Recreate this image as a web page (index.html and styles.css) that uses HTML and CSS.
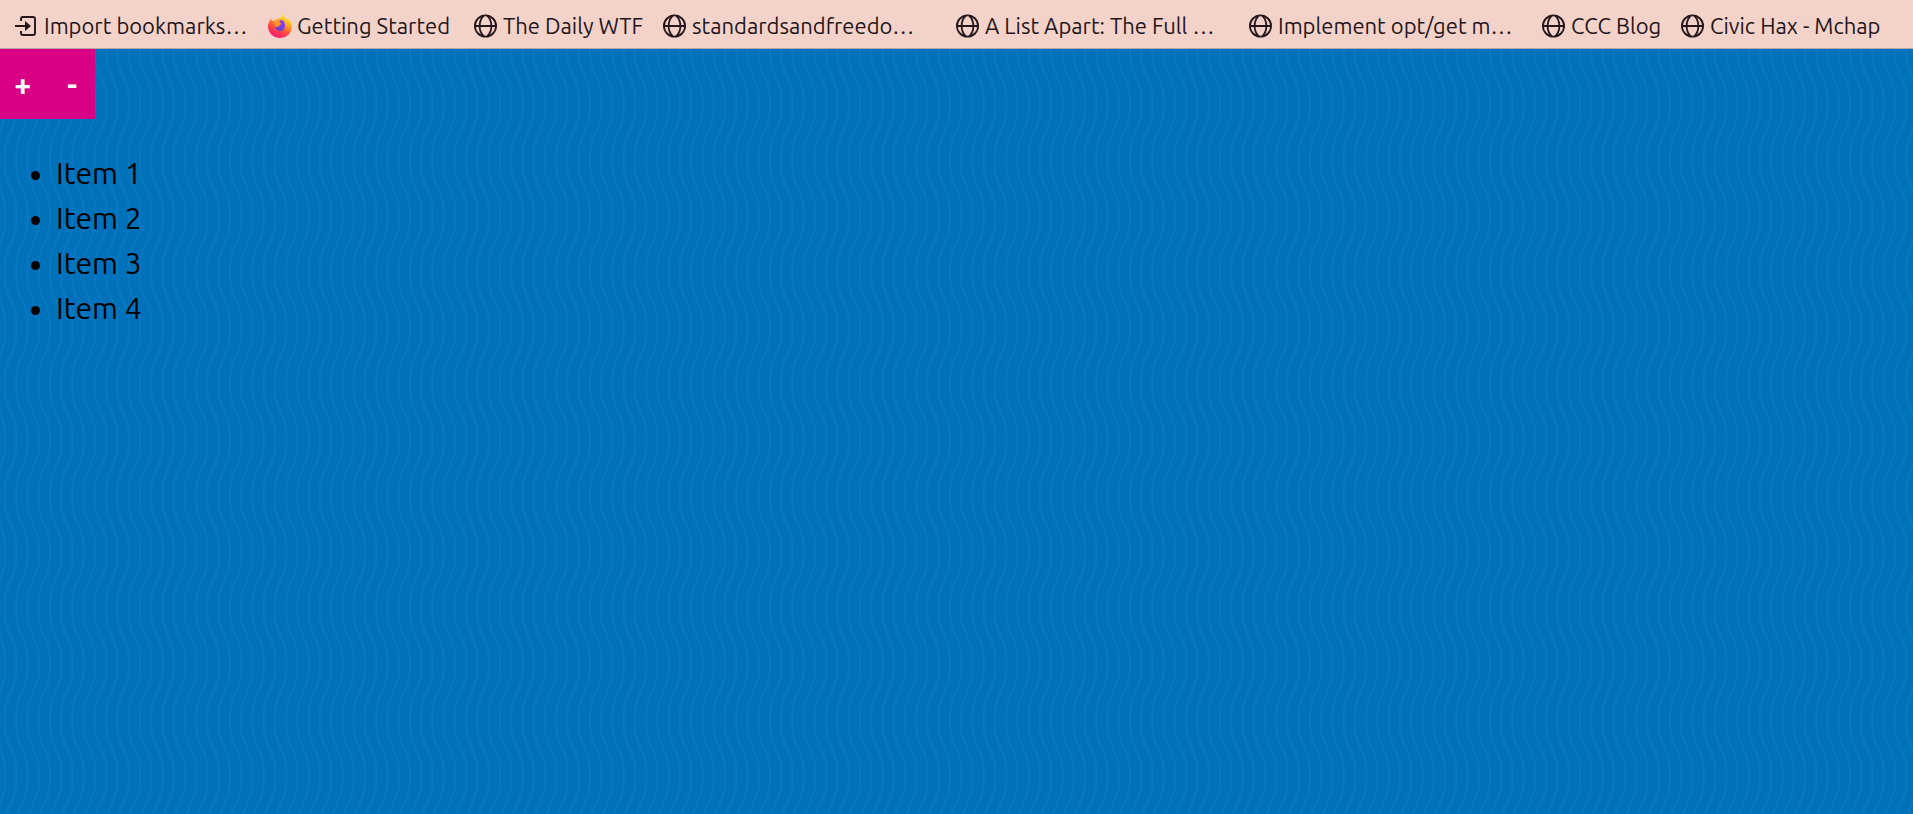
FILE: index.html
```html
<!DOCTYPE html>
<html lang="en">
<head>
<meta charset="utf-8">
<title>Items</title>
<link rel="stylesheet" href="styles.css">
</head>
<body>
<svg class="symbols" aria-hidden="true">
  <symbol id="globe" viewBox="0 0 24 24">
    <g fill="none" stroke="currentColor" stroke-width="1.8">
      <circle cx="11.500" cy="12" r="10.600"/>
      <path d="M1 12h21M9.500 1.800C4.300 7.500 4.300 16.500 9.500 22.200M13.500 1.800c5.200 5.700 5.200 14.700 0 20.400"/>
    </g>
  </symbol>
</svg>
<nav class="bookmarks" aria-label="Bookmarks">
  <a class="bookmark import" href="#"><svg class="icon" viewBox="0 0 24 24"><path d="M6 7V5a2 2 0 0 1 2-2h10a2 2 0 0 1 2 2v14a2 2 0 0 1-2 2H8a2 2 0 0 1-2-2v-2M0 12h11" fill="none" stroke="currentColor" stroke-width="1.900"/><path d="M10 7l6 5-6 5z" fill="currentColor"/></svg><span class="label">Import bookmarks…</span></a>
  <a class="bookmark started" href="#"><svg class="icon" viewBox="0 0 24 24">
    <defs>
      <linearGradient id="flame" x1="0.800" y1="0" x2="0.300" y2="1"><stop offset="0" stop-color="#fff23a"/><stop offset="0.350" stop-color="#ffae20"/><stop offset="0.650" stop-color="#ff4b3e"/><stop offset="1" stop-color="#ee1679"/></linearGradient>
      <linearGradient id="core" x1="1" y1="0" x2="0" y2="1"><stop offset="0" stop-color="#a63be8"/><stop offset="1" stop-color="#5343d8"/></linearGradient>
    </defs>
    <path d="M3.500 4.500l1 2.500 3-.700C9 4.500 11 4 12.500 4c.300-1.500 1.500-3 2.700-4 .300 2.500 2 3.500 3.300 5l1.200-.800C22.500 6.500 24 9.500 24 12.500 24 19 18.500 24 12 24S0 19 0 12.500c0-3 1.200-5.800 3.500-8z" fill="url(#flame)"/>
    <path d="M8.500 8.500c2-.300 3-2.500 5.500-2.500 2.500 1 3.300 3.600 3 6.500-.400 3-2.300 4.500-4.800 4.500C9 17 7.500 15 7.500 12.500l1.500.800 3.500-1.800c-1-.500-3.500-1-4-3z" fill="url(#core)"/>
    <path d="M7.500 6.500c1.500-.500 3-.200 4 .500-.200 1.500 1 2.200 2 2.500-.500 1.500-2.500 1.200-3 2.500-.800.800-2 .800-3 .500C6.800 11 6.800 8 7.500 6.500z" fill="#ff9a24"/>
  </svg><span class="label">Getting Started</span></a>
  <a class="bookmark daily" href="#"><svg class="icon"><use href="#globe"/></svg><span class="label">The Daily WTF</span></a>
  <a class="bookmark long" href="#"><svg class="icon"><use href="#globe"/></svg><span class="label">standardsandfreedo…</span></a>
  <a class="bookmark long" href="#"><svg class="icon"><use href="#globe"/></svg><span class="label">A List Apart: The Full …</span></a>
  <a class="bookmark long" href="#"><svg class="icon"><use href="#globe"/></svg><span class="label">Implement opt/get m…</span></a>
  <a class="bookmark short" href="#"><svg class="icon"><use href="#globe"/></svg><span class="label">CCC Blog</span></a>
  <a class="bookmark" href="#"><svg class="icon"><use href="#globe"/></svg><span class="label">Civic Hax - Mchap</span></a>
</nav>
<main class="page">
  <svg class="waves" aria-hidden="true">
    <defs>
      <pattern id="wave" x="5" y="-1" width="45" height="112" patternUnits="userSpaceOnUse">
        <g fill="none" stroke="#0a78be" stroke-width="1.800">
          <path id="line" d="M-11.250 0v9C-11.250 22 0 34 0 47v18C0 78-11.250 90-11.250 103v9"/>
          <use href="#line" x="11.250"/><use href="#line" x="22.500"/><use href="#line" x="33.750"/><use href="#line" x="45"/><use href="#line" x="56.250"/>
        </g>
      </pattern>
    </defs>
    <rect width="100%" height="100%" fill="url(#wave)"/>
  </svg>
  <div class="controls">
    <button class="control" type="button" aria-label="Add item">+</button>
    <button class="control" type="button" aria-label="Remove item">-</button>
  </div>
  <ul class="items">
    <li>Item 1</li>
    <li>Item 2</li>
    <li>Item 3</li>
    <li>Item 4</li>
  </ul>
</main>
</body>
</html>
```
FILE: styles.css
```css
* { box-sizing: border-box; }

body {
  margin: 0;
  min-height: 100vh;
  display: flex;
  flex-direction: column;
  font-family: Ubuntu, "Noto Sans", sans-serif;
  font-weight: 450;
}

.symbols {
  position: absolute;
  width: 0;
  height: 0;
}

.bookmarks {
  display: flex;
  align-items: center;
  height: 49px;
  padding: 4px 15px 0;
  background: #f3d2c9;
  border-bottom: 1px solid #b9a5a5;
  overflow: hidden;
}

.bookmark {
  display: flex;
  flex: none;
  align-items: center;
  gap: 5px;
  color: #24161a;
  font-size: 22px;
  line-height: 28px;
  white-space: nowrap;
  text-decoration: none;
}

.icon {
  flex: none;
  width: 24px;
  height: 24px;
}

.import { width: 253px; }
.started { width: 206px; }
.daily { width: 189px; }
.long { width: 293px; }
.short { width: 139px; }

.page {
  position: relative;
  flex: 1;
  background: #0072bb;
}

.waves {
  position: absolute;
  inset: 0;
  width: 100%;
  height: 100%;
}

.controls {
  position: relative;
  display: flex;
  gap: 4px;
  width: 95px;
  height: 70px;
  background: #d80085;
}

.control {
  flex: 1;
  padding: 0;
  border: 0;
  background: none;
  color: #fff;
  font: bold 30px Ubuntu, "Noto Sans", sans-serif;
}

.items {
  position: relative;
  margin: 32px 0 0;
  padding-left: 56px;
  color: #000;
  font-size: 30px;
  line-height: 45px;
}
```
